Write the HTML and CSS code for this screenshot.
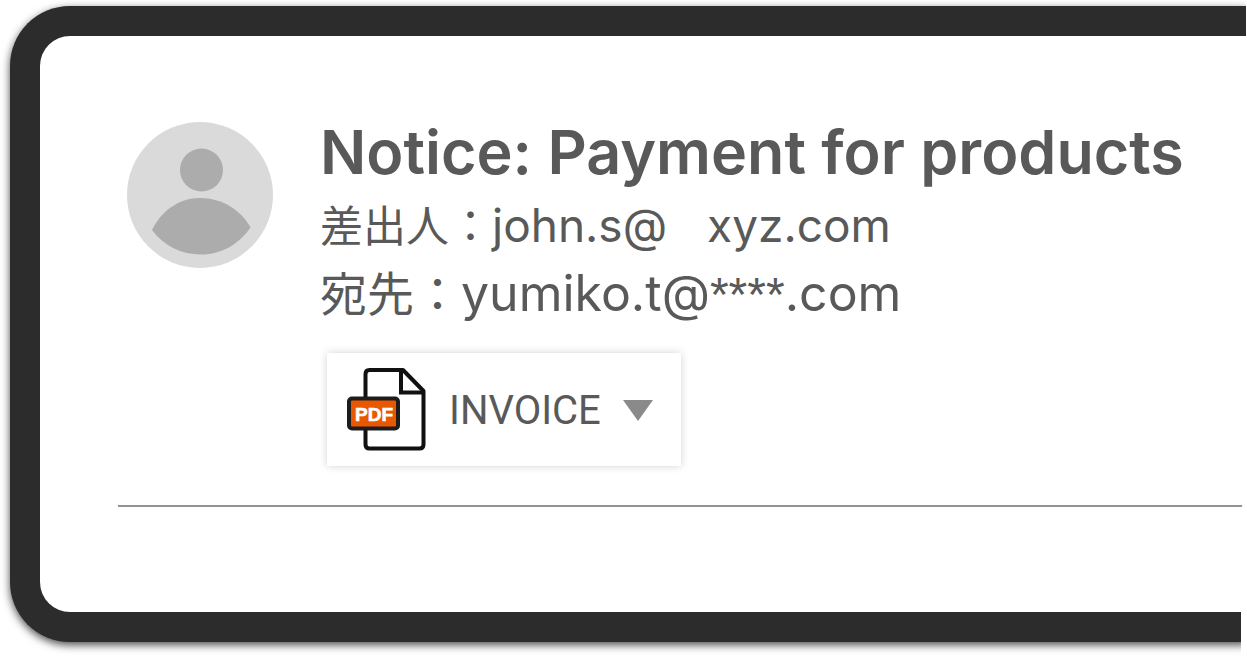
FILE: index.html
```html
<!DOCTYPE html>
<html lang="ja">
<head>
<meta charset="utf-8">
<meta name="viewport" content="width=device-width, initial-scale=1">
<title>Notice: Payment for products</title>
<link rel="stylesheet" href="styles.css">
</head>
<body>
<div class="stage">
  <main class="frame">
    <header class="mail">
      <svg class="avatar" viewBox="0 0 146 146" aria-hidden="true">
        <circle cx="73" cy="73" r="73" fill="#dadada"/>
        <circle cx="74.500" cy="48" r="21.500" fill="#acacac"/>
        <path d="M25 108C34 89 52 76 73 76C95 76 114 88 123.500 105.500C112 122 95 132.500 74 132.500C54 132.500 37 124 25 108Z" fill="#acacac"/>
      </svg>
      <div class="details">
        <h1 class="subject">Notice: Payment for products</h1>
        <p class="sender"><span class="label">差出人：</span>john.s@<span class="domain">xyz.com</span></p>
        <p class="recipient"><span class="label">宛先：</span>yumiko.t@<span class="mask">****</span>.com</p>
        <button class="attachment" type="button">
          <svg class="pdf" viewBox="0 0 80 84" aria-hidden="true">
            <path d="M22.500 2H56L76.500 23V76.500Q76.500 80.500 72.500 80.500H22.500Q18.500 80.500 18.500 76.500V6Q18.500 2 22.500 2Z" fill="#fff" stroke="#111" stroke-width="4" stroke-linejoin="round"/>
            <path d="M54 3V24.500H76" fill="none" stroke="#111" stroke-width="4"/>
            <rect x="2" y="30.500" width="49" height="30" rx="3" fill="#e95800" stroke="#1c1c1c" stroke-width="4"/>
            <text class="pdf-label" x="27" y="53" text-anchor="middle">PDF</text>
          </svg>
          <span>INVOICE</span>
          <svg class="caret" viewBox="0 0 30 21" aria-hidden="true"><path d="M0 0H30L15 21Z" fill="#8a8a8a"/></svg>
        </button>
      </div>
    </header>
    <hr class="divider">
  </main>
</div>
</body>
</html>
```
FILE: styles.css
```css
* {
  box-sizing: border-box;
}

body {
  margin: 0;
  background: #fff;
  color: #595959;
  font-family: Inter, "Noto Sans CJK JP", sans-serif;
}

.stage {
  min-height: 100vh;
  display: flex;
  padding: 6px 0 14px 10px;
  overflow: hidden;
  clip-path: polygon(0 0, calc(100% - 1px) 0, calc(100% - 1px) 50%, calc(100% - 6px) 85%, calc(100% - 6px) 100%, 0 100%);
}

.frame {
  flex: 1;
  min-width: 0;
  padding: 86px 0 40px 78px;
  border: 30px solid #2c2c2c;
  border-right: 0;
  border-radius: 60px 0 0 60px;
  background: #fff;
  box-shadow: 0 3px 9px rgb(0 0 0 / 70%);
}

.mail {
  display: flex;
  gap: 47px;
  padding-left: 9px;
}

.avatar {
  flex: none;
  width: 146px;
  height: 146px;
}

.details {
  flex: 1;
  min-width: 0;
}

.subject,
.sender,
.recipient {
  display: flex;
  align-items: baseline;
  margin: 0;
  white-space: nowrap;
}

.subject {
  font-size: 61px;
  font-weight: 600;
  line-height: 60px;
}

.sender {
  padding-top: 9px;
  font-size: 46px;
  line-height: 64px;
}

.label {
  font-family: "Noto Sans CJK JP", sans-serif;
}

.sender .label {
  font-size: 43px;
}

.domain {
  margin-left: 40px;
}

.recipient {
  font-size: 50px;
  line-height: 68px;
}

.recipient .label {
  font-size: 47px;
}

.mask {
  font-family: "Liberation Sans", sans-serif;
  font-size: 48px;
}

.attachment {
  display: flex;
  align-items: center;
  gap: 22px;
  margin: 24px 0 0 7px;
  padding: 15px 28px 14px 20px;
  border: 0;
  background: #fff;
  box-shadow: 0 0 8px rgb(0 0 0 / 18%);
  color: inherit;
  font-family: Roboto, sans-serif;
  font-size: 40px;
}

.pdf {
  width: 80px;
  height: 84px;
}

.pdf-label {
  fill: #fff;
  font-family: "Liberation Sans", sans-serif;
  font-size: 19px;
  font-weight: 700;
  stroke: #fff;
  stroke-width: 0.600;
}

.caret {
  width: 30px;
  height: 21px;
}

.divider {
  height: 2px;
  margin: 39px 0 0;
  border: 0;
  background: #949292;
}
```
